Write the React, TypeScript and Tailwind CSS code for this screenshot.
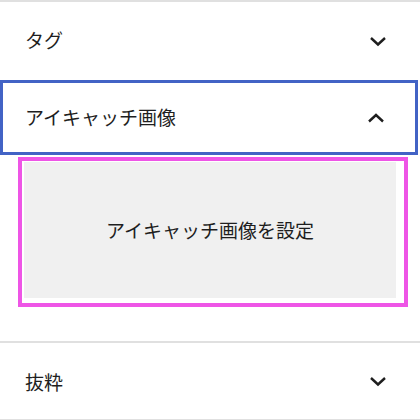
import React from "react";

const Chevron = ({ up }: { up?: boolean }) => (
  <svg width="24" height="24" viewBox="0 0 24 24" className="shrink-0">
    <path
      d={up ? "M5 15.5 L12 9 L19 15.5" : "M5 9 L12 15.5 L19 9"}
      fill="none"
      stroke="#1e1e1e"
      strokeWidth="2.4"
    />
  </svg>
);

export default function App() {
  return (
    <div
      className="w-[420px] h-[420px] bg-white flex flex-col overflow-hidden text-[#1e1e1e]"
      style={{ fontFamily: '"Noto Sans CJK JP", "Noto Sans", sans-serif' }}
    >
      <div className="h-[2px] bg-[#e0e0e0] shrink-0" />
      <div className="h-[78px] shrink-0 flex items-center justify-between pl-[25px] pr-[30px]">
        <span className="text-[19px] leading-none mb-[4px]">タグ</span>
        <Chevron />
      </div>
      <div className="h-[75px] shrink-0 mr-[2px] border-[3px] border-[#4263c5] flex items-center justify-between pl-[22px] pr-[27px]">
        <span className="text-[19px] leading-none mb-[2px]">アイキャッチ画像</span>
        <Chevron up />
      </div>
      <div className="h-[186px] shrink-0 pt-[2px] pl-[18px]">
        <div className="w-[390px] h-[150px] border-[4px] border-[#ee55e6] pt-[1px] pl-[2px] pr-[8px] pb-[5px]">
          <div className="w-full h-full bg-[#f0f0f0] flex items-center justify-center">
            <span className="text-[19px] leading-none mb-[2px]">アイキャッチ画像を設定</span>
          </div>
        </div>
      </div>
      <div className="h-[2px] bg-[#e0e0e0] shrink-0" />
      <div className="h-[76px] shrink-0 flex items-center justify-between pl-[25px] pr-[30px]">
        <span className="text-[19px] leading-none">抜粋</span>
        <Chevron />
      </div>
      <div className="h-[2px] bg-[#e0e0e0] shrink-0" />
    </div>
  );
}
